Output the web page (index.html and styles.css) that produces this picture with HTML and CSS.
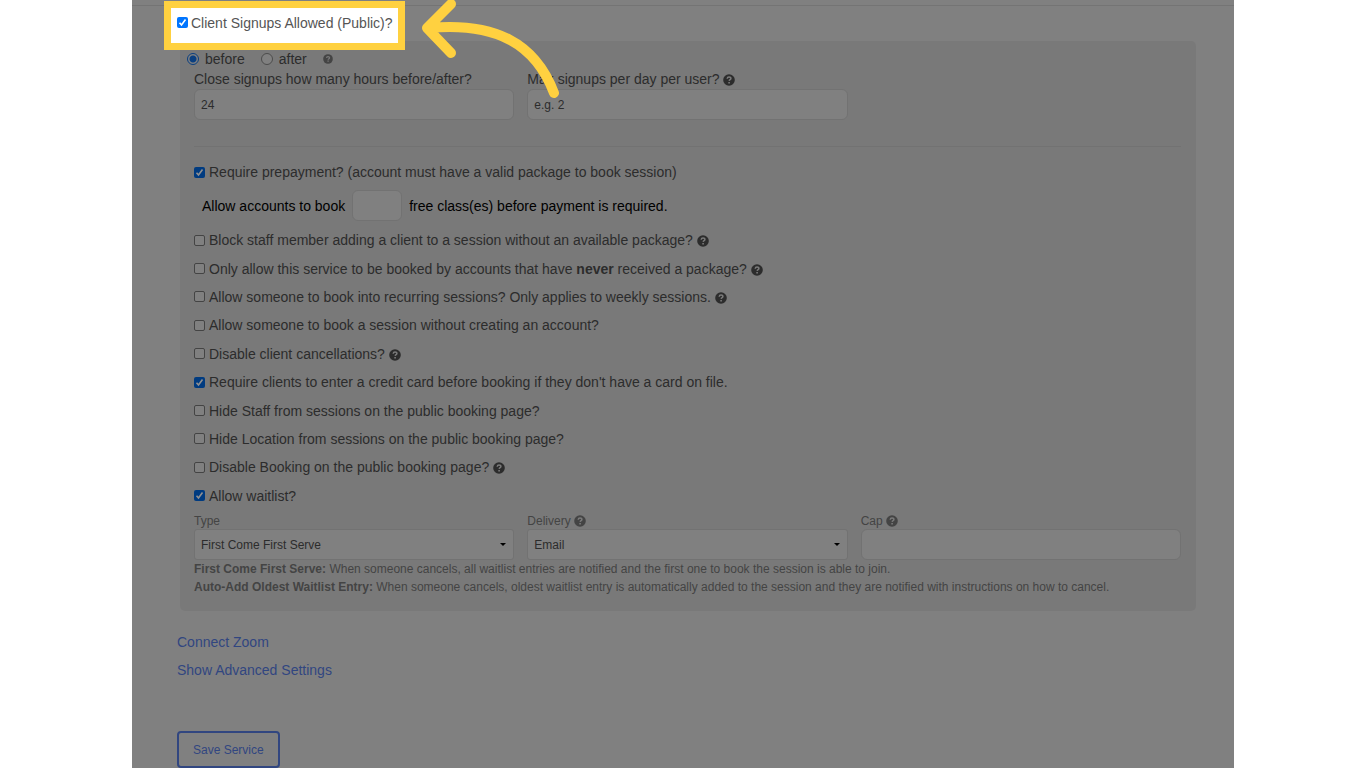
FILE: index.html
```html
<!DOCTYPE html>
<html lang="en">
<head>
<meta charset="utf-8">
<title>Service settings</title>
<link rel="stylesheet" href="styles.css">
</head>
<body>
<svg class="sprite" aria-hidden="true"><symbol id="help" viewBox="0 0 12 12"><circle cx="6" cy="6" r="5.8" fill="currentColor"/><path d="M4.200 4.700C4.300 3.500 5 3 6 3s1.900.6 1.900 1.600C7.900 5.700 6.300 5.600 6.200 6.900" fill="none" stroke="#7a7a7a" stroke-width="1.500"/><path d="M5.300 7.900h1.600v1.500H5.300z" fill="#7a7a7a"/></symbol></svg>
<main class="page">
  <header class="top">
    <label class="spot"><input type="checkbox" class="tick bright" checked><span>Client Signups Allowed (Public)?</span></label>
  </header>
  <form class="form">
    <section class="panel">
      <div class="radios">
        <label class="radio"><input type="radio" name="when" checked>before</label>
        <label class="radio"><input type="radio" name="when">after</label>
        <svg class="help faint"><use href="#help"/></svg>
      </div>
      <div class="grid">
        <div class="field"><label class="name" for="hours">Close signups how many hours before/after?</label><input id="hours" class="box" type="text" value="24"></div>
        <div class="field"><label class="name" for="max">Max signups per day per user? <svg class="help"><use href="#help"/></svg></label><input id="max" class="box" type="text" placeholder="e.g. 2"></div>
      </div>
      <hr class="rule">
      <label class="row"><input type="checkbox" class="tick" checked><span>Require prepayment? (account must have a valid package to book session)</span></label>
      <div class="free"><label for="free">Allow accounts to book</label><input id="free" class="box tiny" type="text"><span>free class(es) before payment is required.</span></div>
      <div class="options">
        <label class="row"><input type="checkbox" class="tick"><span>Block staff member adding a client to a session without an available package? <svg class="help"><use href="#help"/></svg></span></label>
        <label class="row"><input type="checkbox" class="tick"><span>Only allow this service to be booked by accounts that have <b>never</b> received a package? <svg class="help"><use href="#help"/></svg></span></label>
        <label class="row"><input type="checkbox" class="tick"><span>Allow someone to book into recurring sessions? Only applies to weekly sessions. <svg class="help"><use href="#help"/></svg></span></label>
        <label class="row"><input type="checkbox" class="tick"><span>Allow someone to book a session without creating an account?</span></label>
        <label class="row"><input type="checkbox" class="tick"><span>Disable client cancellations? <svg class="help"><use href="#help"/></svg></span></label>
        <label class="row"><input type="checkbox" class="tick" checked><span>Require clients to enter a credit card before booking if they don't have a card on file.</span></label>
        <label class="row"><input type="checkbox" class="tick"><span>Hide Staff from sessions on the public booking page?</span></label>
        <label class="row"><input type="checkbox" class="tick"><span>Hide Location from sessions on the public booking page?</span></label>
        <label class="row"><input type="checkbox" class="tick"><span>Disable Booking on the public booking page? <svg class="help"><use href="#help"/></svg></span></label>
        <label class="row"><input type="checkbox" class="tick" checked><span>Allow waitlist?</span></label>
      </div>
      <div class="grid small">
        <div class="field"><label class="name" for="type">Type</label><select id="type" class="box select"><option>First Come First Serve</option><option>Auto-Add Oldest Waitlist Entry</option></select></div>
        <div class="field"><label class="name" for="delivery">Delivery <svg class="help"><use href="#help"/></svg></label><select id="delivery" class="box select"><option>Email</option></select></div>
        <div class="field"><label class="name" for="cap">Cap <svg class="help"><use href="#help"/></svg></label><input id="cap" class="box" type="text"></div>
      </div>
      <p class="note"><b>First Come First Serve:</b> When someone cancels, all waitlist entries are notified and the first one to book the session is able to join.</p>
      <p class="note"><b>Auto-Add Oldest Waitlist Entry:</b> When someone cancels, oldest waitlist entry is automatically added to the session and they are notified with instructions on how to cancel.</p>
    </section>
    <nav class="links"><a href="#zoom">Connect Zoom</a><a href="#advanced">Show Advanced Settings</a></nav>
    <button class="save" type="button">Save Service</button>
  </form>
  <svg class="arrow" viewBox="0 0 150 104" aria-hidden="true"><path d="M36 4L12 28L36 53M14 28C80 22 120 43 139 93" fill="none" stroke="#ffd140" stroke-width="10" stroke-linecap="round" stroke-linejoin="round"/></svg>
</main>
</body>
</html>
```
FILE: styles.css
```css
* { box-sizing: border-box; }
html { overflow: hidden; }
body { margin: 0; background: #fff; color: #2c2c2c; font: 14px/20px "Liberation Sans", Arial, sans-serif; }
.sprite { display: none; }
.page { position: relative; min-height: 100vh; max-height: 100vh; margin: 0 132px; background: #808080; overflow: hidden; }
.top { height: 41px; padding: 1px 0 0 32px; background: linear-gradient(#747474, #747474) 0 5px / 100% 1px no-repeat; }
.spot { position: relative; z-index: 1; display: inline-flex; align-items: center; gap: 3px; height: 49px; width: 241px; padding: 0 6px 6px; border: 7px solid #ffd140; background: #fff; color: #555; white-space: nowrap; }
.form { padding: 0 38px 0 48px; }
.panel { background: #797979; border-radius: 5px; padding: 8px 15px 15px 14px; }
.radios { display: flex; align-items: center; gap: 16px; margin-left: -7px; height: 20px; }
.radio { display: flex; align-items: center; gap: 6px; }
.radio input { appearance: none; width: 12px; height: 12px; margin: 0; border: 1px solid #4c4c4c; border-radius: 50%; background: #808080; }
.radio input:checked { border-color: #0a3f80; background: radial-gradient(circle, #0a3f80 3px, #808080 4px); }
.grid { display: grid; grid-template-columns: repeat(3, 1fr); gap: 13px; }
.field { display: flex; flex-direction: column; min-width: 0; }
.name { line-height: 20px; }
.box { width: 100%; height: 31px; padding: 0 6px; border: 1px solid #727272; border-radius: 6px; background: #808080; color: #2c2c2c; font: 12px "Liberation Sans", Arial, sans-serif; }
.box::placeholder { color: #2c2c2c; opacity: 1; }
.select { appearance: none; border-radius: 3px; background: #808080 url("data:image/svg+xml,%3Csvg xmlns='http://www.w3.org/2000/svg' width='6' height='4'%3E%3Cpath d='M0 0h6L3 3z'/%3E%3C/svg%3E") right 7px center no-repeat; }
.rule { margin: 26px 0 11px; border: 0; border-top: 1px solid #727272; }
.row { display: flex; align-items: center; min-height: 28px; gap: 4px; }
.options { display: grid; grid-auto-rows: 1fr; min-height: 284px; }
.tick { flex: none; appearance: none; width: 11px; height: 11px; margin: 0; border: 1px solid #444; border-radius: 2px; background: #808080; }
.tick:checked { border: 0; background: #003b80 url("data:image/svg+xml,%3Csvg xmlns='http://www.w3.org/2000/svg' viewBox='0 0 11 11'%3E%3Cpath d='M2.500 5.700l2 2.200 4-5.300' fill='none' stroke='%23909090' stroke-width='1.600'/%3E%3C/svg%3E") center / 11px; }
.bright:checked { background: #0075ff url("data:image/svg+xml,%3Csvg xmlns='http://www.w3.org/2000/svg' viewBox='0 0 11 11'%3E%3Cpath d='M2.500 5.700l2 2.200 4-5.300' fill='none' stroke='white' stroke-width='1.600'/%3E%3C/svg%3E") center / 11px; }
.help { width: 12px; height: 12px; vertical-align: -2px; }
.faint { color: #444; width: 10px; height: 10px; }
.free { display: flex; align-items: center; gap: 7px; height: 39px; margin-bottom: 1px; padding-left: 8px; color: #000; }
.tiny { width: 50px; }
.small { font-size: 12px; color: #444; padding-top: 3px; }
.small .name { line-height: 16px; }
.note { margin: 0; font-size: 12px; line-height: 18px; color: #444; }
.links { display: flex; flex-direction: column; align-items: flex-start; gap: 8px; margin: 21px 0 51px -3px; }
.links a { color: #314680; text-decoration: none; }
.save { display: block; margin-left: -3px; height: 37px; padding: 0 14px; border: 2px solid #314680; border-radius: 4px; background: none; color: #314680; font: 12px "Liberation Sans", Arial, sans-serif; }
.arrow { position: absolute; left: 283px; top: 0; width: 150px; height: 104px; z-index: 2; }
```
